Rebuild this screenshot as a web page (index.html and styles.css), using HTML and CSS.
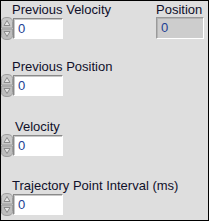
FILE: index.html
```html
<!DOCTYPE html>
<html lang="en">
<head>
    <meta charset="UTF-8">
    <title>Trajectory Controls</title>
    <link rel="stylesheet" href="styles.css">
</head>
<body>

    <div class="panel">
        <div class="top-row">
            <div class="field">
                <div class="label">Previous Velocity</div>
                <div class="control">
                    <svg class="spinner" width="12" height="23" viewBox="0 0 12 23">
                        <path d="M0.5 11 V4.5 Q0.5 0.5 6 0.5 Q11.5 0.5 11.5 4.5 V11 Z" fill="#c9c9c9" stroke="#9c9c9c"/>
                        <path d="M0.5 12 V18.5 Q0.5 22.5 6 22.5 Q11.5 22.5 11.5 18.5 V12 Z" fill="#bdbdbd" stroke="#9c9c9c"/>
                        <path d="M3 8.5 L6 3.5 L9 8.5 Z" fill="#e6e6e6" stroke="#8c8c8c"/>
                        <path d="M3 14.5 L6 19.5 L9 14.5 Z" fill="#e6e6e6" stroke="#8c8c8c"/>
                    </svg>
                    <input class="num" type="text" value="0">
                </div>
            </div>
            <div class="field indicator-field">
                <div class="label">Position</div>
                <div class="indicator">0</div>
            </div>
        </div>

        <div class="field gap-a">
            <div class="label">Previous Position</div>
            <div class="control">
                <svg class="spinner" width="12" height="23" viewBox="0 0 12 23">
                    <path d="M0.5 11 V4.5 Q0.5 0.5 6 0.5 Q11.5 0.5 11.5 4.5 V11 Z" fill="#c9c9c9" stroke="#9c9c9c"/>
                    <path d="M0.5 12 V18.5 Q0.5 22.5 6 22.5 Q11.5 22.5 11.5 18.5 V12 Z" fill="#bdbdbd" stroke="#9c9c9c"/>
                    <path d="M3 8.5 L6 3.5 L9 8.5 Z" fill="#e6e6e6" stroke="#8c8c8c"/>
                    <path d="M3 14.5 L6 19.5 L9 14.5 Z" fill="#e6e6e6" stroke="#8c8c8c"/>
                </svg>
                <input class="num" type="text" value="0">
            </div>
        </div>

        <div class="field gap-b">
            <div class="label indent">Velocity</div>
            <div class="control">
                <svg class="spinner" width="12" height="23" viewBox="0 0 12 23">
                    <path d="M0.5 11 V4.5 Q0.5 0.5 6 0.5 Q11.5 0.5 11.5 4.5 V11 Z" fill="#c9c9c9" stroke="#9c9c9c"/>
                    <path d="M0.5 12 V18.5 Q0.5 22.5 6 22.5 Q11.5 22.5 11.5 18.5 V12 Z" fill="#bdbdbd" stroke="#9c9c9c"/>
                    <path d="M3 8.5 L6 3.5 L9 8.5 Z" fill="#e6e6e6" stroke="#8c8c8c"/>
                    <path d="M3 14.5 L6 19.5 L9 14.5 Z" fill="#e6e6e6" stroke="#8c8c8c"/>
                </svg>
                <input class="num" type="text" value="0">
            </div>
        </div>

        <div class="field gap-c">
            <div class="label">Trajectory Point Interval (ms)</div>
            <div class="control">
                <svg class="spinner" width="12" height="23" viewBox="0 0 12 23">
                    <path d="M0.5 11 V4.5 Q0.5 0.5 6 0.5 Q11.5 0.5 11.5 4.5 V11 Z" fill="#c9c9c9" stroke="#9c9c9c"/>
                    <path d="M0.5 12 V18.5 Q0.5 22.5 6 22.5 Q11.5 22.5 11.5 18.5 V12 Z" fill="#bdbdbd" stroke="#9c9c9c"/>
                    <path d="M3 8.5 L6 3.5 L9 8.5 Z" fill="#e6e6e6" stroke="#8c8c8c"/>
                    <path d="M3 14.5 L6 19.5 L9 14.5 Z" fill="#e6e6e6" stroke="#8c8c8c"/>
                </svg>
                <input class="num" type="text" value="0">
            </div>
        </div>
    </div>

</body>
</html>
```

FILE: styles.css
```css
body {
    margin: 0;
    padding: 0;
    font-family: "Liberation Sans", Arial, sans-serif;
}

.panel {
    box-sizing: border-box;
    width: 209px;
    height: 221px;
    border: 1px solid #000;
    background-color: #dedede;
    padding: 1px 0 0 0;
    overflow: hidden;
}

.top-row {
    display: flex;
    justify-content: space-between;
}

.label {
    font-size: 13px;
    line-height: 15px;
    height: 15px;
    color: #10102a;
    padding-left: 11px;
    white-space: nowrap;
}

.label.indent {
    padding-left: 14px;
}

.control {
    display: flex;
    align-items: center;
}

.spinner {
    display: block;
    flex: none;
}

.num {
    box-sizing: border-box;
    width: 50px;
    height: 21px;
    margin: 0;
    padding: 0 0 0 4px;
    font-family: "Liberation Sans", Arial, sans-serif;
    font-size: 13px;
    color: #1c3f94;
    background-color: #fff;
    border: 1px solid;
    border-color: #8a8a8a #fff #fff #8a8a8a;
    box-shadow: inset 1px 1px 0 #c8c8c8;
    outline: none;
}

.indicator-field {
    width: 48px;
    margin-right: 4px;
}

.indicator-field .label {
    padding-left: 0;
}

.indicator {
    box-sizing: border-box;
    width: 48px;
    height: 22px;
    padding-left: 4px;
    font-size: 13px;
    line-height: 20px;
    color: #1c3f94;
    background-color: #cdcdcd;
    border: 1px solid;
    border-color: #9a9a9a #fff #fff #9a9a9a;
    box-shadow: inset 1px 1px 0 #b4b4b4;
}

.gap-a {
    margin-top: 19px;
}

.gap-b {
    margin-top: 22px;
}

.gap-c {
    margin-top: 21px;
}
```
